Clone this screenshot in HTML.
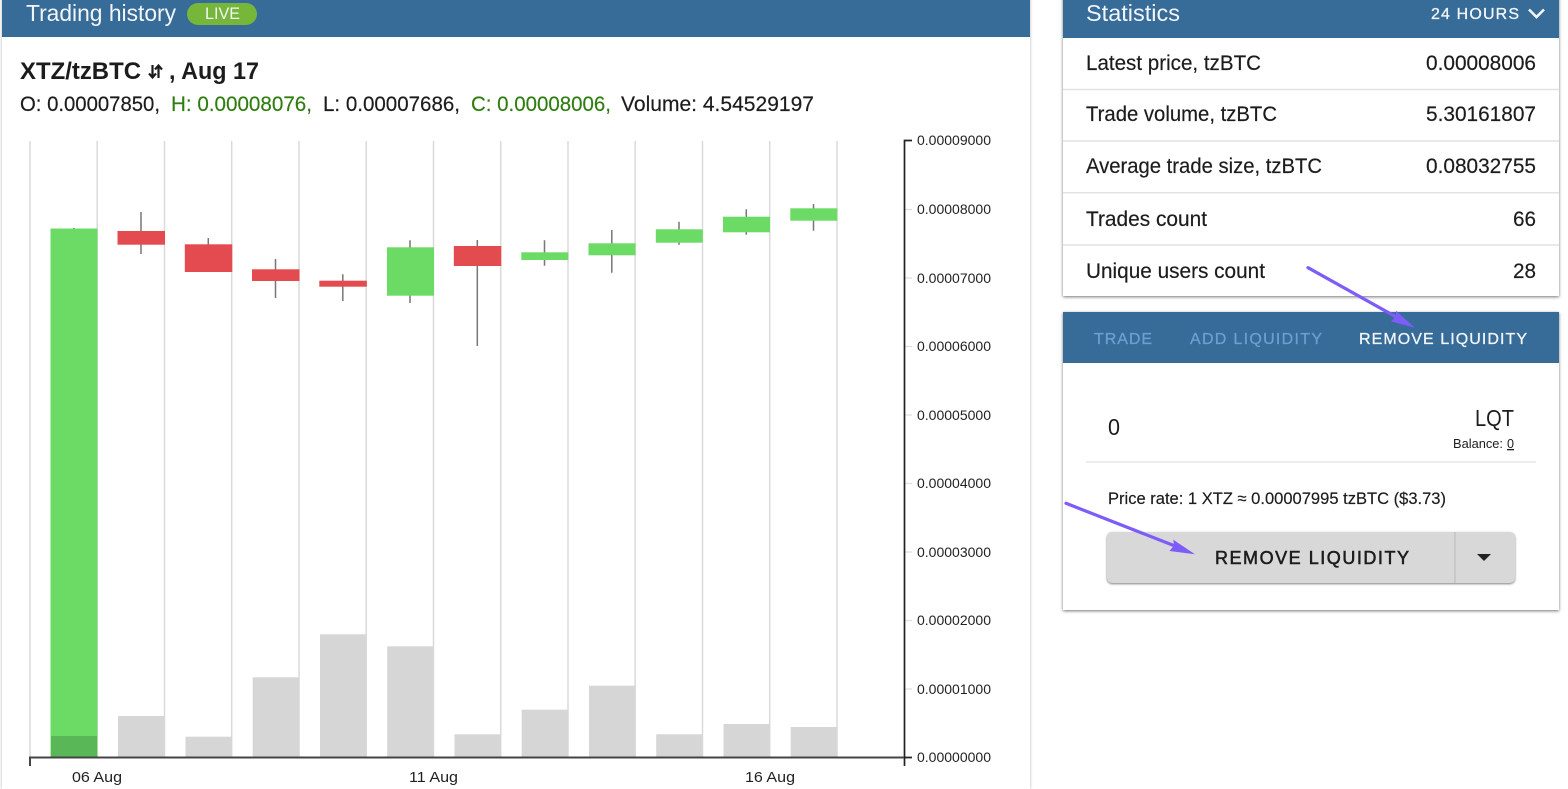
<!DOCTYPE html>
<html><head><meta charset="utf-8"><style>
html,body{margin:0;padding:0;background:#fff;width:1568px;height:789px;overflow:hidden}
.r{position:relative;width:1568px;height:789px;overflow:hidden}
.c{position:absolute;background:#fff}
svg{position:absolute;left:0;top:0;display:block}
text{font-family:"Liberation Sans",sans-serif;fill:#1c1c1c}
.d{stroke:#1c1c1c;stroke-width:.18}
.w{fill:#f2f6fa}
.g{fill:#2f7d0f;stroke:#2f7d0f;stroke-width:.15}
.a{font-size:14px;fill:#222}
.t{fill:#6c9fd2;font-size:16px;stroke:#6c9fd2;stroke-width:.3}
</style></head><body><div class="r">
<div class="c" style="left:2px;top:-10px;width:1028px;height:799px;box-shadow:0 0 3px rgba(0,0,0,.3)"></div>
<div class="c" style="left:2px;top:-10px;width:1028px;height:47px;background:#376b98"></div>
<div class="c" style="left:1063px;top:-10px;width:496px;height:306px;box-shadow:0 1px 3px rgba(0,0,0,.55)"></div>
<div class="c" style="left:1063px;top:-10px;width:496px;height:48px;background:#376b98"></div>
<div class="c" style="left:1063px;top:312px;width:496px;height:298px;box-shadow:0 1px 3px rgba(0,0,0,.55)"></div>
<div class="c" style="left:1063px;top:312px;width:496px;height:51px;background:#376b98"></div>
<div class="c" style="left:1107px;top:532px;width:408px;height:51px;background:#d8d8d8;border-radius:5px;box-shadow:0 1px 2px rgba(0,0,0,.5)"></div>
<svg width="1568" height="789" viewBox="0 0 1568 789">
<text x="26" y="21" font-size="23" class="w" textLength="150" lengthAdjust="spacingAndGlyphs">Trading history</text>
<rect x="187" y="3" width="70" height="22" rx="11" fill="#76b73a"/>
<text x="205" y="19" font-size="17" class="w" textLength="35" lengthAdjust="spacingAndGlyphs">LIVE</text>
<text x="20" y="79" font-size="24" font-weight="bold" textLength="121" lengthAdjust="spacingAndGlyphs">XTZ/tzBTC</text>
<path d="M152.500 65v12M149 73.500l3.500 4 3.500-4M158.500 78v-12M155 69.500l3.500-4 3.500 4" fill="none" stroke="#1c1c1c" stroke-width="2.200"/>
<text x="169" y="79" font-size="24" font-weight="bold" textLength="90" lengthAdjust="spacingAndGlyphs">, Aug 17</text>
<text x="20" y="111" font-size="21" class="d" textLength="140" lengthAdjust="spacingAndGlyphs">O: 0.00007850,</text>
<text x="171" y="111" font-size="21" class="g" textLength="141" lengthAdjust="spacingAndGlyphs">H: 0.00008076,</text>
<text x="323" y="111" font-size="21" class="d" textLength="137" lengthAdjust="spacingAndGlyphs">L: 0.00007686,</text>
<text x="471" y="111" font-size="21" class="g" textLength="140" lengthAdjust="spacingAndGlyphs">C: 0.00008006,</text>
<text x="621" y="111" font-size="21" class="d" textLength="193" lengthAdjust="spacingAndGlyphs">Volume: 4.54529197</text>

<g stroke="#dadada" stroke-width="1.500">
<path d="M30 141V757M97.200 141V757M164.500 141V757M231.700 141V757M299 141V757M366.200 141V757M433.500 141V757M500.700 141V757M568 141V757M635.200 141V757M702.500 141V757M769.700 141V757M837 141V757"/>
</g>
<g fill="#d6d6d6">
<rect x="118" y="716" width="46.500" height="41"/>
<rect x="185.500" y="736.700" width="46.500" height="20.300"/>
<rect x="252.700" y="677.300" width="46.500" height="79.700"/>
<rect x="320" y="634.300" width="46.500" height="122.700"/>
<rect x="387.200" y="646.300" width="46.500" height="110.700"/>
<rect x="454.500" y="734.300" width="46.500" height="22.700"/>
<rect x="521.700" y="709.700" width="46.500" height="47.300"/>
<rect x="589" y="685.700" width="46.500" height="71.300"/>
<rect x="656.200" y="734.300" width="46.500" height="22.700"/>
<rect x="723.500" y="724" width="46.500" height="33"/>
<rect x="790.700" y="727" width="46.500" height="30"/>
</g>
<g stroke="#777" stroke-width="1.500">
<path d="M73.800 228V230M141 212V254M208.300 238V246M275.500 259V298M342.800 274.300V301M410 240.300V303M477.300 240V346M544.500 240.300V265.700M611.800 230V272.700M679 221.700V244.700M746.300 209.300V234.700M813.500 204V230.700"/>
</g>
<g fill="#6bdb66">
<rect x="50.500" y="228.500" width="47" height="529"/>
<rect x="387" y="247.300" width="47" height="48.400"/>
<rect x="521.300" y="252.300" width="47" height="7.700"/>
<rect x="588.500" y="243.300" width="47" height="12"/>
<rect x="655.800" y="229.300" width="47" height="13.400"/>
<rect x="723" y="216.700" width="47" height="15.600"/>
<rect x="790.300" y="208.300" width="47" height="12.400"/>
</g>
<g fill="#e34b50">
<rect x="117.500" y="231" width="47.500" height="13.700"/>
<rect x="184.800" y="244.300" width="47.500" height="27.700"/>
<rect x="252" y="269.300" width="47.500" height="11.700"/>
<rect x="319.300" y="280.700" width="47.500" height="6"/>
<rect x="453.800" y="246" width="47.500" height="20"/>
</g>
<rect x="51" y="736" width="46" height="21" fill="#5ab758"/>
<g stroke="#ddd" stroke-width="1.300">
<path d="M905 209.500H912M905 278H912M905 346.500H912M905 415H912M905 483.500H912M905 552H912M905 620.500H912M905 689H912"/>
</g>
<path d="M912 140.500H904.500V766M904 757.500H912" fill="none" stroke="#222" stroke-width="1.700"/>
<path d="M30 766V757.500H904" fill="none" stroke="#444" stroke-width="2"/>
<text class="a" x="917" y="145" textLength="74" lengthAdjust="spacingAndGlyphs">0.00009000</text>
<text class="a" x="917" y="214" textLength="74" lengthAdjust="spacingAndGlyphs">0.00008000</text>
<text class="a" x="917" y="283" textLength="74" lengthAdjust="spacingAndGlyphs">0.00007000</text>
<text class="a" x="917" y="351" textLength="74" lengthAdjust="spacingAndGlyphs">0.00006000</text>
<text class="a" x="917" y="420" textLength="74" lengthAdjust="spacingAndGlyphs">0.00005000</text>
<text class="a" x="917" y="488" textLength="74" lengthAdjust="spacingAndGlyphs">0.00004000</text>
<text class="a" x="917" y="557" textLength="74" lengthAdjust="spacingAndGlyphs">0.00003000</text>
<text class="a" x="917" y="625" textLength="74" lengthAdjust="spacingAndGlyphs">0.00002000</text>
<text class="a" x="917" y="694" textLength="74" lengthAdjust="spacingAndGlyphs">0.00001000</text>
<text class="a" x="917" y="762" textLength="74" lengthAdjust="spacingAndGlyphs">0.00000000</text>
<text class="a" x="72" y="782" style="font-size:15px" textLength="50" lengthAdjust="spacingAndGlyphs">06 Aug</text>
<text class="a" x="409" y="782" style="font-size:15px" textLength="49" lengthAdjust="spacingAndGlyphs">11 Aug</text>
<text class="a" x="745" y="782" style="font-size:15px" textLength="50" lengthAdjust="spacingAndGlyphs">16 Aug</text>

<text x="1086" y="21" font-size="23" class="w" textLength="94" lengthAdjust="spacingAndGlyphs">Statistics</text>
<text x="1431" y="19" font-size="16" class="w" textLength="88" lengthAdjust="spacing" stroke="#f2f6fa" stroke-width=".3">24 HOURS</text>
<path d="M1529 9.500l7.500 7.500 7.500-7.500" fill="none" stroke="#f2f6fa" stroke-width="2.600"/>
<g stroke="#e2e2e2" stroke-width="1.500"><path d="M1063 89.500H1559M1063 141H1559M1063 192.700H1559M1063 245H1559"/></g>
<text x="1086" y="70" font-size="21" class="d" textLength="175" lengthAdjust="spacingAndGlyphs">Latest price, tzBTC</text>
<text x="1086" y="121" font-size="21" class="d" textLength="191" lengthAdjust="spacingAndGlyphs">Trade volume, tzBTC</text>
<text x="1086" y="173" font-size="21" class="d" textLength="236" lengthAdjust="spacingAndGlyphs">Average trade size, tzBTC</text>
<text x="1086" y="226" font-size="21" class="d" textLength="121" lengthAdjust="spacingAndGlyphs">Trades count</text>
<text x="1086" y="278" font-size="21" class="d" textLength="179" lengthAdjust="spacingAndGlyphs">Unique users count</text>
<text x="1426" y="70" font-size="21" class="d" textLength="110" lengthAdjust="spacingAndGlyphs">0.00008006</text>
<text x="1426" y="121" font-size="21" class="d" textLength="110" lengthAdjust="spacingAndGlyphs">5.30161807</text>
<text x="1426" y="173" font-size="21" class="d" textLength="110" lengthAdjust="spacingAndGlyphs">0.08032755</text>
<text x="1513" y="226" font-size="21" class="d" textLength="23" lengthAdjust="spacingAndGlyphs">66</text>
<text x="1513" y="278" font-size="21" class="d" textLength="23" lengthAdjust="spacingAndGlyphs">28</text>

<text x="1094" y="344" class="t" textLength="58" lengthAdjust="spacing">TRADE</text>
<text x="1190" y="344" class="t" textLength="132" lengthAdjust="spacing">ADD LIQUIDITY</text>
<text x="1359" y="344" font-size="16" class="w" textLength="168" lengthAdjust="spacing" stroke="#f2f6fa" stroke-width=".3">REMOVE LIQUIDITY</text>

<text x="1108" y="435" font-size="23" textLength="12" lengthAdjust="spacingAndGlyphs">0</text>
<text x="1475" y="426" font-size="23" textLength="39" lengthAdjust="spacingAndGlyphs">LQT</text>
<text x="1453" y="448" font-size="13" textLength="50" lengthAdjust="spacingAndGlyphs">Balance:</text>
<text x="1507" y="448" font-size="13" text-decoration="underline" textLength="7" lengthAdjust="spacingAndGlyphs">0</text>
<path d="M1086 462H1536" stroke="#e0e0e0" stroke-width="1.300"/>
<text x="1108" y="504" font-size="17" class="d" textLength="338" lengthAdjust="spacingAndGlyphs">Price rate: 1 XTZ ≈ 0.00007995 tzBTC ($3.73)</text>
<path d="M1455 532V583" stroke="#c4c4c4" stroke-width="1.500"/>
<text x="1215" y="564" font-size="18" textLength="194" lengthAdjust="spacing" stroke="#1c1c1c" stroke-width=".55">REMOVE LIQUIDITY</text>
<path d="M1477 554h14l-7 7z" fill="#222"/>

<g fill="#7d5cf8" stroke="none">
<path d="M1308 267.700L1398 318" stroke="#7d5cf8" stroke-width="3.200" stroke-linecap="round"/>
<path d="M1396 310.700L1415 327.700L1391 321.500L1396 316z"/>
<path d="M1066 503.300L1175 546" stroke="#7d5cf8" stroke-width="3.200" stroke-linecap="round"/>
<path d="M1173.300 539.700L1195 554.300L1169.500 551L1174 545.500z"/>
</g>
</svg>
</div></body></html>
